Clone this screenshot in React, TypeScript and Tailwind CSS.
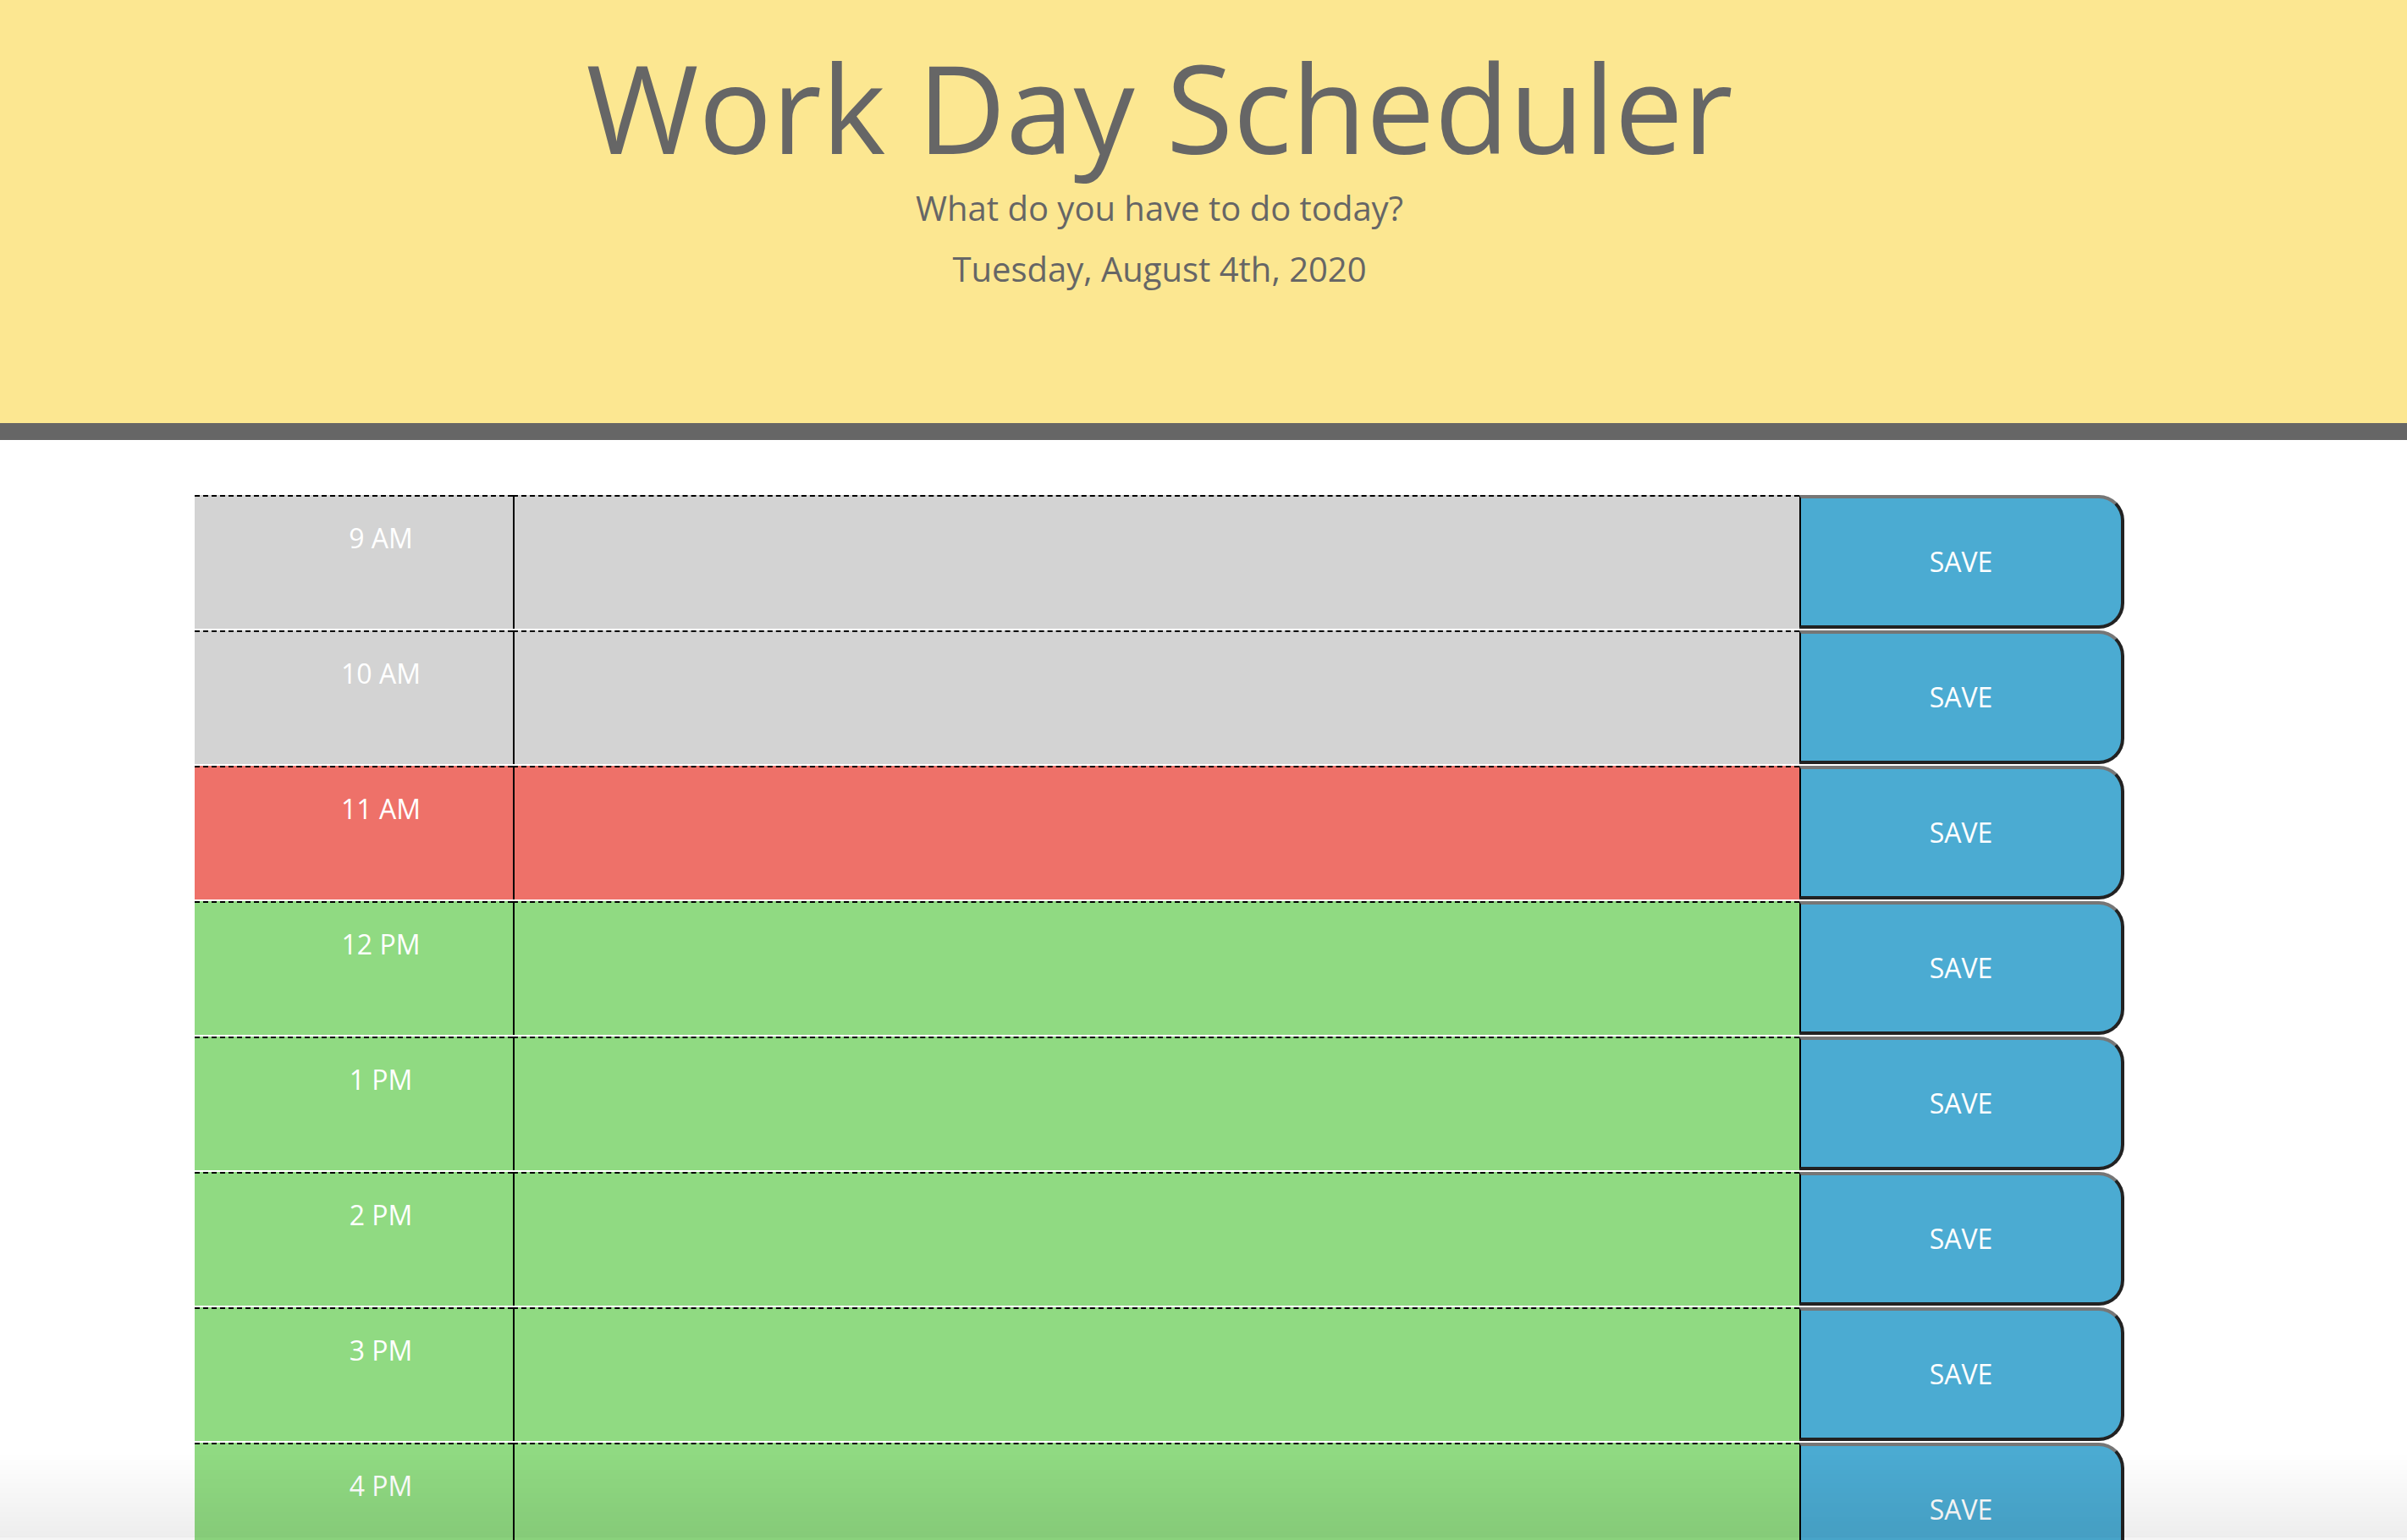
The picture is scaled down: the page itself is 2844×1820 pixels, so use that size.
import { useState } from "react";

type Slot = { label: string; state: "past" | "present" | "future" };

const slots: Slot[] = [
  { label: "9 AM", state: "past" },
  { label: "10 AM", state: "past" },
  { label: "11 AM", state: "present" },
  { label: "12 PM", state: "future" },
  { label: "1 PM", state: "future" },
  { label: "2 PM", state: "future" },
  { label: "3 PM", state: "future" },
  { label: "4 PM", state: "future" },
  { label: "5 PM", state: "future" },
];

const stateBg = {
  past: "bg-[#d3d3d3]",
  present: "bg-[#ee7169]",
  future: "bg-[#90da82]",
};

const TimeBlock = ({ slot }: { slot: Slot }) => {
  const [text, setText] = useState("");
  return (
    <div className="flex h-[160px] border-t-2 border-white">
      <div
        className={`w-[376px] shrink-0 border-t-2 border-dashed border-black pl-[64px] pt-[33px] text-center text-[32px] leading-[32px] text-white ${stateBg[slot.state]}`}
      >
        {slot.label}
      </div>
      <textarea
        value={text}
        onChange={(e) => setText(e.target.value)}
        className={`w-[1520px] shrink-0 resize-none border-t-2 border-l-2 border-dashed border-black p-[20px] text-[32px] text-black outline-none ${stateBg[slot.state]}`}
        style={{ borderLeftStyle: "solid" }}
      />
      <button className="flex flex-1 items-center justify-center rounded-r-[30px] border-t-4 border-r-4 border-b-4 border-l-2 border-t-[#767676] border-r-[#222] border-b-[#222] border-l-black bg-[#4babd2] text-[32px] text-white">
        SAVE
      </button>
    </div>
  );
};

const App = () => {
  return (
    <div className="relative min-h-screen bg-white font-['Open_Sans',sans-serif] text-[#666]">
      <header className="h-[520px] border-b-[20px] border-[#666] bg-[#fce791]">
        <div className="w-[2740px] pt-[54px] text-center">
          <h1 className="text-[144px] leading-[144px] font-normal">Work Day Scheduler</h1>
          <p className="mt-[28px] text-[40px] leading-[40px]">What do you have to do today?</p>
          <p className="mt-[32px] text-[40px] leading-[40px]">Tuesday, August 4th, 2020</p>
        </div>
      </header>

      <main className="flex w-[2740px] justify-center pt-[63px] pb-[64px]">
        <div className="w-[2280px]">
          {slots.map((slot) => (
            <TimeBlock key={slot.label} slot={slot} />
          ))}
        </div>
      </main>

      {/* soft shade along the bottom edge of the window */}
      <div className="pointer-events-none fixed inset-x-0 bottom-[3px] h-[100px] bg-gradient-to-b from-transparent to-black/[0.07]" />
      <div className="pointer-events-none fixed inset-x-0 bottom-0 h-[3px] bg-black/[0.04]" />
    </div>
  );
};

export default App;
